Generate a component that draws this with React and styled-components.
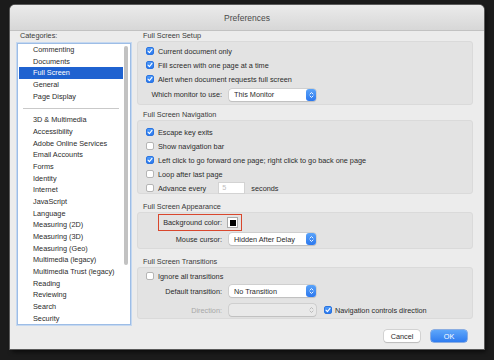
import React from 'react';
import styled, { createGlobalStyle } from 'styled-components';

const GlobalStyle = createGlobalStyle`
  html, body {
    margin: 0;
    padding: 0;
    background: #1b1b1b;
  }
  body {
    font-family: "Liberation Sans", Arial, sans-serif;
    font-size: 7.3px;
    color: #2b2b2b;
  }
`;

const Screen = styled.div`
  width: 494px;
  height: 360px;
  padding: 5px 0 0 10px;
  box-sizing: border-box;
  background: #1b1b1b;
`;

const Window = styled.div`
  width: 474px;
  height: 344px;
  background: #ececec;
  border-radius: 5px 5px 0 0;
  box-shadow: 0 0 0 1px #5a5a5a, 2px 3px 4px rgba(0, 0, 0, 0.6);
  display: flex;
  flex-direction: column;
  overflow: hidden;
`;

const TitleBar = styled.div`
  height: 26px;
  flex: none;
  background: linear-gradient(#ebebeb, #d7d7d7);
  border-bottom: 1px solid #c2c2c2;
  box-sizing: border-box;
  display: flex;
  align-items: center;
  justify-content: center;
  font-size: 8.5px;
  color: #4a4a4a;
`;

const Body = styled.div`
  flex: 1;
  display: flex;
  gap: 6px;
  padding: 0 11px 0 7px;
`;

const LeftColumn = styled.div`
  width: 114px;
  flex: none;
  display: flex;
  flex-direction: column;
`;

const RightColumn = styled.div`
  flex: 1;
  display: flex;
  flex-direction: column;
`;

const Heading = styled.div`
  height: 10px;
  line-height: 10px;
  padding-left: ${p => p.$indent || 6}px;
  margin-top: ${p => p.$top || 0}px;
  color: #3a3a3a;
  white-space: nowrap;
`;

const ListBox = styled.div`
  margin-top: 2px;
  height: 282px;
  box-sizing: border-box;
  background: #fff;
  border: 1px solid #9dbde6;
  box-shadow: 0 0 0 1px #c5d8f0;
  position: relative;
  padding: 0 7px 0 1px;
`;

const ScrollThumb = styled.div`
  position: absolute;
  right: 2px;
  top: 2px;
  width: 4px;
  height: 219px;
  border-radius: 2px;
  background: #c2c2c2;
`;

const ListItem = styled.div`
  height: 11.7px;
  line-height: 11.7px;
  padding-left: 14px;
  white-space: nowrap;
  background: ${p => (p.$selected ? '#1f62d0' : 'transparent')};
  color: ${p => (p.$selected ? '#fff' : '#2b2b2b')};
`;

const Separator = styled.div`
  height: 11.7px;
  display: flex;
  align-items: center;
  padding: 0 4px 0 4px;
  &::after {
    content: '';
    flex: 1;
    height: 1px;
    background: #c9c9c9;
  }
`;

const Group = styled.div`
  height: ${p => p.$h}px;
  box-sizing: border-box;
  background: #e3e3e3;
  border: 1px solid #dadada;
  border-radius: 3px;
  padding: ${p => p.$pt || 0}px 8px 0 8px;
  display: flex;
  flex-direction: column;
`;

const Row = styled.div`
  height: ${p => p.$h || 14}px;
  margin-top: ${p => p.$mt || 0}px;
  flex: none;
  display: flex;
  align-items: center;
  gap: ${p => p.$gap || 4}px;
  white-space: nowrap;
  position: relative;
`;

const Box = styled.span`
  width: 8px;
  height: 8px;
  flex: none;
  box-sizing: border-box;
  border-radius: 2px;
  display: inline-flex;
  align-items: center;
  justify-content: center;
  background: ${p => (p.$checked ? 'linear-gradient(#4f9bf8, #2a78ef)' : '#fff')};
  border: 1px solid ${p => (p.$checked ? '#2b74e0' : '#b5b5b5')};
`;

const Check = ({ checked }) => (
  <Box $checked={checked}>
    {checked && (
      <svg width="6" height="6" viewBox="0 0 6 6">
        <path d="M1 3.2 L2.4 4.6 L5 1.4" fill="none" stroke="#fff" strokeWidth="1.1" strokeLinecap="round" strokeLinejoin="round" />
      </svg>
    )}
  </Box>
);

const FieldLabel = styled.span`
  width: 76px;
  flex: none;
  text-align: right;
  color: ${p => (p.$disabled ? '#a8a8a8' : '#2b2b2b')};
`;

const Select = styled.div`
  width: 87px;
  height: 12px;
  box-sizing: border-box;
  flex: none;
  display: flex;
  align-items: center;
  border-radius: 3px;
  background: ${p => (p.$disabled ? '#e9e9e9' : '#fff')};
  box-shadow: 0 0 0 0.5px #bdbdbd, 0 0.5px 1px rgba(0, 0, 0, 0.15);
  padding-left: 5px;
`;

const SelectText = styled.span`
  flex: 1;
  overflow: hidden;
`;

const Stepper = styled.span`
  width: 10px;
  height: 12px;
  flex: none;
  border-radius: 3px;
  display: flex;
  align-items: center;
  justify-content: center;
  background: ${p => (p.$disabled ? 'transparent' : 'linear-gradient(#5aa3f9, #2c78ee)')};
`;

const Dropdown = ({ value, disabled }) => (
  <Select $disabled={disabled}>
    <SelectText>{value}</SelectText>
    <Stepper $disabled={disabled}>
      <svg width="5" height="8" viewBox="0 0 5 8">
        <path d="M1 3 L2.5 1.5 L4 3 M1 5 L2.5 6.5 L4 5" fill="none" stroke={disabled ? '#b4b4b4' : '#fff'} strokeWidth="0.9" strokeLinecap="round" strokeLinejoin="round" />
      </svg>
    </Stepper>
  </Select>
);

const NumberInput = styled.span`
  width: 27px;
  height: 12px;
  box-sizing: border-box;
  background: #fff;
  border: 1px solid #d3d3d3;
  color: #c0c0c0;
  padding-left: 3px;
  line-height: 10px;
  margin-left: 8px;
  margin-right: 2px;
`;

const Swatch = styled.span`
  width: 11px;
  height: 11px;
  box-sizing: border-box;
  border: 1px solid #aaa;
  background: #fff;
  padding: 1.5px;
  display: flex;
  &::after {
    content: '';
    flex: 1;
    background: #000;
  }
`;

const Highlight = styled.span`
  position: absolute;
  left: 12px;
  top: 0;
  width: 84px;
  height: 17px;
  box-sizing: border-box;
  border: 1.5px solid #d9472d;
  pointer-events: none;
`;

const InlineCheck = styled.span`
  display: flex;
  align-items: center;
  gap: 3px;
  margin-left: 1px;
`;

const Buttons = styled.div`
  margin-top: 11px;
  display: flex;
  justify-content: flex-end;
  gap: 11px;
  padding-right: 6px;
`;

const Button = styled.div`
  width: 36px;
  height: 12px;
  box-sizing: border-box;
  border-radius: 3px;
  display: flex;
  align-items: center;
  justify-content: center;
  background: ${p => (p.$primary ? 'linear-gradient(#5ea6fa, #2f7cf0)' : '#fff')};
  color: ${p => (p.$primary ? '#fff' : '#2b2b2b')};
  box-shadow: ${p => (p.$primary ? '0 0 0 0.5px #2b6fd6' : '0 0 0 0.5px #bdbdbd, 0 0.5px 1px rgba(0,0,0,0.2)')};
`;

const topCategories = ['Commenting', 'Documents', 'Full Screen', 'General', 'Page Display'];
const otherCategories = [
  '3D & Multimedia', 'Accessibility', 'Adobe Online Services', 'Email Accounts', 'Forms',
  'Identity', 'Internet', 'JavaScript', 'Language', 'Measuring (2D)', 'Measuring (3D)',
  'Measuring (Geo)', 'Multimedia (legacy)', 'Multimedia Trust (legacy)', 'Reading',
  'Reviewing', 'Search', 'Security',
];

const App = () => (
  <Screen>
    <GlobalStyle />
    <Window>
      <TitleBar>Preferences</TitleBar>
      <Body>
        <LeftColumn>
          <Heading $indent={3}>Categories:</Heading>
          <ListBox>
            {topCategories.map(c => (
              <ListItem key={c} $selected={c === 'Full Screen'}>{c}</ListItem>
            ))}
            <Separator />
            {otherCategories.map(c => (
              <ListItem key={c}>{c}</ListItem>
            ))}
            <ScrollThumb />
          </ListBox>
        </LeftColumn>

        <RightColumn>
          <Heading>Full Screen Setup</Heading>
          <Group $h={64} $pt={2}>
            <Row><Check checked />Current document only</Row>
            <Row><Check checked />Fill screen with one page at a time</Row>
            <Row><Check checked />Alert when document requests full screen</Row>
            <Row $h={17} $gap={7}>
              <FieldLabel>Which monitor to use:</FieldLabel>
              <Dropdown value="This Monitor" />
            </Row>
          </Group>

          <Heading $top={5}>Full Screen Navigation</Heading>
          <Group $h={74} $pt={4}>
            <Row><Check checked />Escape key exits</Row>
            <Row><Check />Show navigation bar</Row>
            <Row><Check checked />Left click to go forward one page; right click to go back one page</Row>
            <Row><Check />Loop after last page</Row>
            <Row><Check />Advance every<NumberInput>5</NumberInput>seconds</Row>
          </Group>

          <Heading $top={8}>Full Screen Appearance</Heading>
          <Group $h={37} $pt={1}>
            <Row $h={17} $gap={5}>
              <FieldLabel>Background color:</FieldLabel>
              <Swatch />
              <Highlight />
            </Row>
            <Row $h={16} $gap={7}>
              <FieldLabel>Mouse cursor:</FieldLabel>
              <Dropdown value="Hidden After Delay" />
            </Row>
          </Group>

          <Heading $top={8}>Full Screen Transitions</Heading>
          <Group $h={52} $pt={1}>
            <Row><Check />Ignore all transitions</Row>
            <Row $h={16} $gap={7}>
              <FieldLabel>Default transition:</FieldLabel>
              <Dropdown value="No Transition" />
            </Row>
            <Row $h={16} $mt={3} $gap={7}>
              <FieldLabel $disabled>Direction:</FieldLabel>
              <Dropdown value="" disabled />
              <InlineCheck><Check checked />Navigation controls direction</InlineCheck>
            </Row>
          </Group>

          <Buttons>
            <Button>Cancel</Button>
            <Button $primary>OK</Button>
          </Buttons>
        </RightColumn>
      </Body>
    </Window>
  </Screen>
);

export default App;
